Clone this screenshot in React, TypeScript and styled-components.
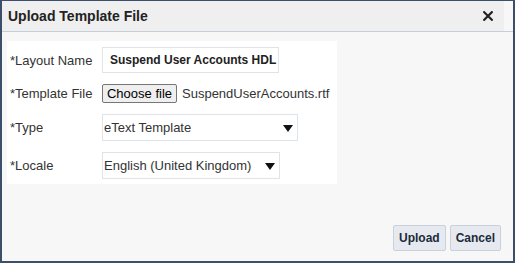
import React from 'react'
import styled, { createGlobalStyle } from 'styled-components'

const Global = createGlobalStyle`
  html, body {
    margin: 0;
    padding: 0;
    background: #ffffff;
  }
  * {
    box-sizing: border-box;
  }
`

const Dialog = styled.div`
  width: 515px;
  height: 263px;
  border: 2px solid #3b4f6b;
  border-top-width: 1px;
  background-color: #f7f7f7;
  display: flex;
  flex-direction: column;
  font-family: 'Liberation Sans', Arial, sans-serif;
  color: #333333;
`

const Header = styled.div`
  display: flex;
  height: 31px;
  border-bottom: 1px solid #c5ced9;
  flex-shrink: 0;
`

const HeaderMain = styled.div`
  flex: 1;
  display: flex;
  align-items: center;
  justify-content: space-between;
  background-color: #efefef;
  padding: 0 11px 1px 6px;
`

const HeaderEdge = styled.div`
  width: 9px;
  background-color: #f7f7f7;
`

const Title = styled.h1`
  margin: 0;
  font-size: 14px;
  font-weight: 700;
  color: #222222;
`

const Close = styled.button`
  border: 0;
  padding: 0;
  background: transparent;
  width: 10px;
  height: 10px;
  display: flex;
  cursor: pointer;
`

const Body = styled.div`
  flex: 1;
  display: flex;
  flex-direction: column;
  justify-content: space-between;
  padding: 9px 12px 10px 5px;
`

const Panel = styled.div`
  width: 330px;
  background-color: #ffffff;
  padding: 6px 0 5px 3px;
  display: flex;
  flex-direction: column;
  gap: 11px;
`

const Row = styled.div`
  display: flex;
  align-items: center;
`

const Label = styled.label`
  width: 92px;
  font-size: 13px;
  color: #333333;
`

const TextInput = styled.div`
  width: 177px;
  height: 26px;
  border: 1px solid #dfe4ea;
  display: flex;
  align-items: center;
  padding-left: 7px;
  font-size: 12px;
  font-weight: 700;
  color: #222222;
  white-space: nowrap;
  overflow: hidden;
`

const FileButton = styled.button`
  height: 19px;
  width: 75px;
  border: 1px solid #767676;
  border-radius: 2px;
  background-color: #efefef;
  font-family: 'Liberation Sans', Arial, sans-serif;
  font-size: 13px;
  color: #000000;
  padding: 0;
`

const FileName = styled.span`
  margin-left: 5px;
  font-size: 13px;
  color: #333333;
`

const Select = styled.div<{ $width: number }>`
  width: ${p => p.$width}px;
  height: 27px;
  border: 1px solid #dfe4ea;
  display: flex;
  align-items: center;
  justify-content: space-between;
  padding: 0 4px 0 1px;
  font-size: 13px;
  color: #333333;
`

const Arrow = styled.span`
  width: 0;
  height: 0;
  border-left: 5px solid transparent;
  border-right: 5px solid transparent;
  border-top: 7px solid #111111;
  margin-top: 2px;
`

const Footer = styled.div`
  display: flex;
  justify-content: flex-end;
  gap: 4px;
`

const ActionButton = styled.button`
  height: 26px;
  padding: 0 5px;
  border: 1px solid #c9d1db;
  border-radius: 2px;
  background-color: #e6eaf0;
  font-family: 'Liberation Sans', Arial, sans-serif;
  font-size: 12px;
  font-weight: 700;
  color: #1d2a3a;
  cursor: pointer;
`

const App = () => {
  return (
    <>
      <Global />
      <Dialog>
        <Header>
          <HeaderMain>
            <Title>Upload Template File</Title>
            <Close aria-label='Close'>
              <svg width='10' height='10' viewBox='0 0 10 10'>
                <path d='M1.2 1.2 L8.8 8.8 M8.8 1.2 L1.2 8.8' stroke='#222' strokeWidth='2.2' strokeLinecap='square' />
              </svg>
            </Close>
          </HeaderMain>
          <HeaderEdge />
        </Header>
        <Body>
          <Panel>
            <Row>
              <Label>*Layout Name</Label>
              <TextInput>Suspend User Accounts HDL</TextInput>
            </Row>
            <Row>
              <Label>*Template File</Label>
              <FileButton>Choose file</FileButton>
              <FileName>SuspendUserAccounts.rtf</FileName>
            </Row>
            <Row>
              <Label>*Type</Label>
              <Select $width={196}>
                eText Template
                <Arrow />
              </Select>
            </Row>
            <Row>
              <Label>*Locale</Label>
              <Select $width={178}>
                English (United Kingdom)
                <Arrow />
              </Select>
            </Row>
          </Panel>
          <Footer>
            <ActionButton>Upload</ActionButton>
            <ActionButton>Cancel</ActionButton>
          </Footer>
        </Body>
      </Dialog>
    </>
  )
}

export default App
